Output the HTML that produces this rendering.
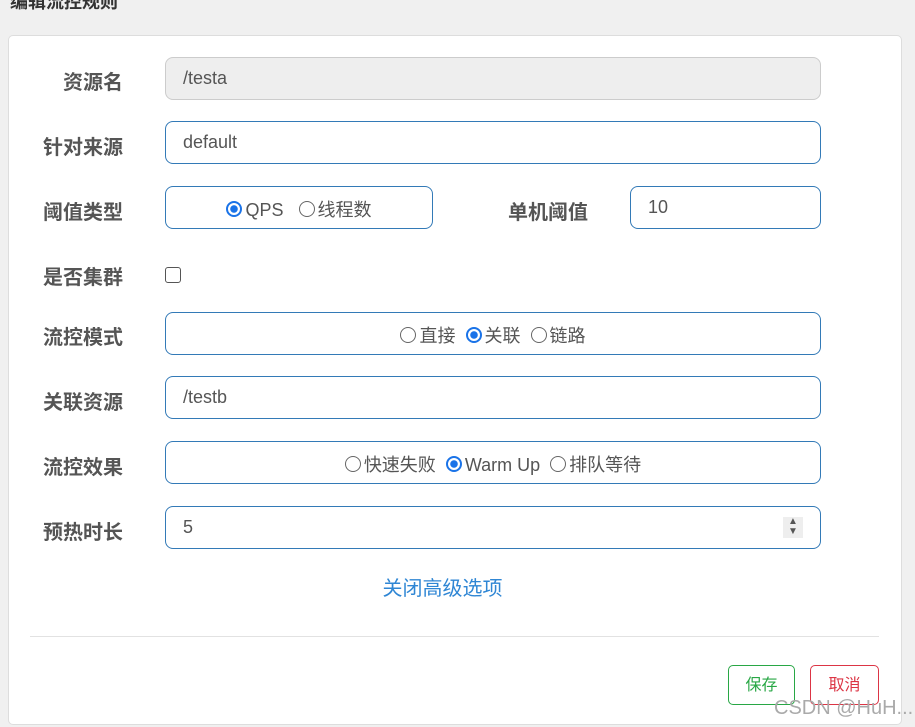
<!DOCTYPE html>
<html><head><meta charset="utf-8"><style>
body{margin:0;width:915px;height:727px;background:#f0f0f0;position:relative;overflow:hidden;font-family:"Liberation Sans","Noto Sans CJK SC",sans-serif;}
.card{position:absolute;left:8px;top:35px;width:892px;height:688px;background:#fff;border:1px solid #ddd;border-radius:5px;}
.lbl{position:absolute;width:123px;text-align:right;font-weight:bold;font-size:20px;color:#555;}
.inp{position:absolute;left:165px;width:656px;height:43px;border:1px solid #337ab7;border-radius:8px;box-sizing:border-box;font-size:18px;color:#555;line-height:41px;padding-left:17px;}
.c{text-align:center;padding-left:0;line-height:47px;}
.r{display:inline-block;width:16px;height:16px;border:1px solid #666;border-radius:50%;vertical-align:-1px;margin-right:3px;box-sizing:border-box;}
.r.on{border:2px solid #1a73e8;background:radial-gradient(circle,#1a73e8 0 3.5px,#fff 4px);}
.btn{position:absolute;top:665px;height:40px;width:67px;box-sizing:border-box;border-radius:5px;font-size:16px;text-align:center;line-height:38px;}
</style></head><body>
<div style="position:absolute;left:10px;top:-12px;font-size:18px;font-weight:bold;color:#333">编辑流控规则</div>
<div class="card"></div>
<div class="lbl" style="top:66px">资源名</div>
<div class="inp" style="top:57px;background:#eee;border-color:#ccc">/testa</div>
<div class="lbl" style="top:131px">针对来源</div>
<div class="inp" style="top:121px">default</div>
<div class="lbl" style="top:196px">阈值类型</div>
<div class="inp c" style="top:186px;width:268px"><span class="r on"></span>QPS &nbsp;&nbsp;<span class="r"></span>线程数</div>
<div class="lbl" style="top:196px;left:465px">单机阈值</div>
<div class="inp" style="top:186px;left:630px;width:191px">10</div>
<div class="lbl" style="top:261px">是否集群</div>
<div style="position:absolute;left:165px;top:267px;width:16px;height:16px;border:1px solid #555;border-radius:3px;box-sizing:border-box"></div>
<div class="lbl" style="top:321px">流控模式</div>
<div class="inp c" style="top:312px"><span class="r"></span>直接 &nbsp;<span class="r on"></span>关联 &nbsp;<span class="r"></span>链路</div>
<div class="lbl" style="top:386px">关联资源</div>
<div class="inp" style="top:376px">/testb</div>
<div class="lbl" style="top:451px">流控效果</div>
<div class="inp c" style="top:441px"><span class="r"></span>快速失败 &nbsp;<span class="r on"></span>Warm Up &nbsp;<span class="r"></span>排队等待</div>
<div class="lbl" style="top:516px">预热时长</div>
<div class="inp" style="top:506px">5<div style="position:absolute;right:17px;top:10px;width:20px;height:21px;background:#eee;font-size:10px;line-height:10px;text-align:center;color:#555">▲<br>▼</div></div>
<div style="position:absolute;left:0;width:915px;top:572px;text-align:center;font-size:20px;color:#2f86d4;padding-right:30px;box-sizing:border-box">关闭高级选项</div>
<div style="position:absolute;left:30px;top:636px;width:849px;height:1px;background:#e2e2e2"></div>
<div class="btn" style="left:728px;border:1px solid #28a745;color:#28a745;line-height:40px">保存</div>
<div class="btn" style="left:810px;width:69px;border:1px solid #dc3545;color:#dc3545;line-height:40px">取消</div>
<div style="position:absolute;left:774px;top:697px;font-size:20px;color:#aaa">CSDN @HuH...</div>
</body></html>
